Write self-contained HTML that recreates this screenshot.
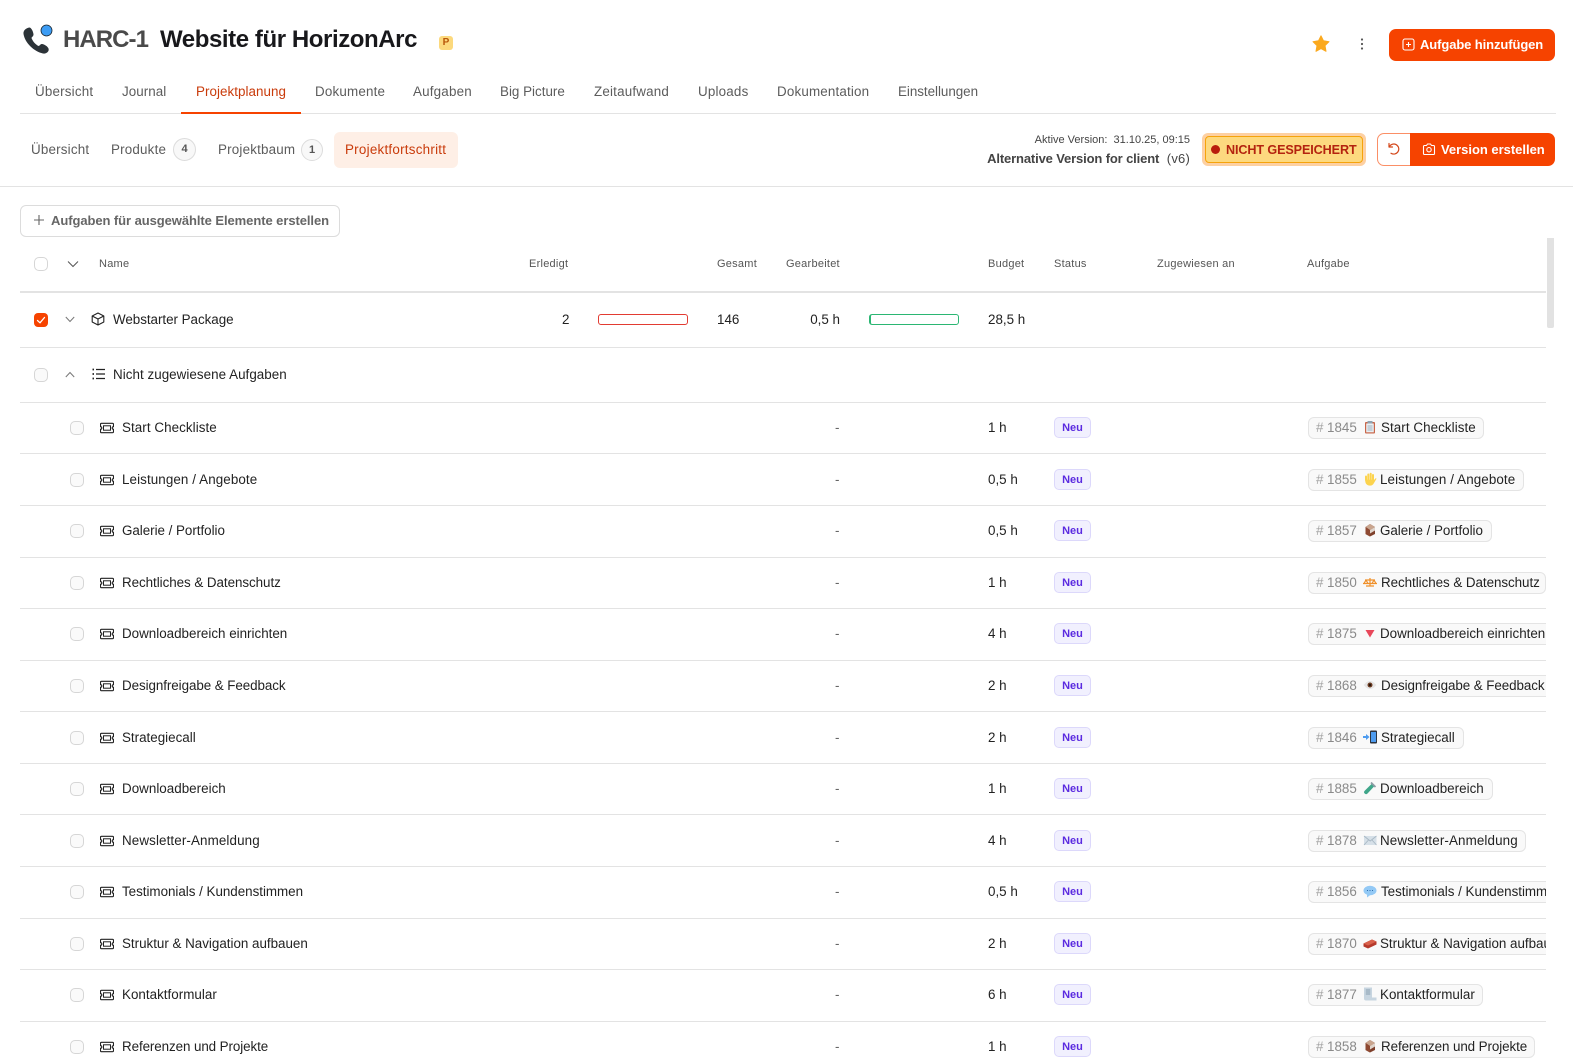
<!DOCTYPE html>
<html lang="de"><head><meta charset="utf-8"><title>HARC-1</title>
<style>
*{box-sizing:border-box}
html,body{margin:0;padding:0;background:#fff}
body{width:1573px;height:1052px;overflow:hidden;position:relative;font-family:"Liberation Sans",Arial,sans-serif;font-size:13.4px;color:#222}
.a{position:absolute;white-space:nowrap}
.t{position:absolute;white-space:nowrap;line-height:20px;height:20px;letter-spacing:0}
.nav{top:82px;color:#5c5c5c;letter-spacing:.19px}
.sub{top:140px;color:#5c5c5c;letter-spacing:.19px}
.ln{position:absolute;left:20px;width:1526px;height:1px;background:#e3e3e3}
.cnt{position:absolute;width:23px;height:23px;border-radius:50%;background:#f8f8f8;border:1px solid #dcdcdc;font-size:11px;font-weight:bold;color:#555;text-align:center;line-height:21px}
.th{top:254px;font-size:11px;color:#555;letter-spacing:.25px}
.cb{position:absolute;width:14px;height:14px;border:1px solid #d6d6d6;border-radius:5px;background:#fafafa}
.r{position:absolute;left:0;width:1546px;height:24px;overflow:hidden}
.r .cb{left:70px;top:5px}
.r svg.tk{position:absolute;left:100px;top:5px}
.r .n{left:122px;top:2px;letter-spacing:var(--l)}
.r .d{left:835px;top:2px;color:#666}
.r .b{left:988px;top:2px}
.r .s{position:absolute;left:1054px;top:1px;width:37px;height:21px;border:1px solid #dcd8fb;background:#f1f0fe;border-radius:5px;color:#5b2be0;font-size:11px;line-height:20px;text-align:center;font-weight:bold}
.c{position:absolute;left:1308px;top:1px;height:22px;background:#f9f9f9;border:1px solid #e4e4e4;border-radius:6px;white-space:nowrap}
.c i{position:absolute;left:7px;top:0;font-style:normal;line-height:20px;color:#a3a3a3;letter-spacing:0}
.c u{position:absolute;left:18px;top:0;text-decoration:none;line-height:20px;color:#8a8a8a;letter-spacing:0}
.c svg{position:absolute;left:54px;top:2px;width:14px;height:14px}
.c b{position:absolute;left:72px;top:0;font-weight:normal;line-height:20px;color:#222;letter-spacing:var(--l);white-space:nowrap}
</style></head><body>

<svg class="a" style="left:22px;top:24px" width="32" height="32" viewBox="0 0 32 32"><path d="M7.5 3.5 C4 4 1 6.500 1.500 10 C3 19 12 27.500 21 29.500 C24.500 30 27.500 27.500 26.500 24.500 C26 22.500 21.500 19.500 19.500 20 C18 20.500 17.500 22 16.500 22 C13.500 20.500 10.500 17 9.500 14 C9.500 13 11.500 12.500 11.500 10.500 C11.500 8.500 9.500 3.500 7.500 3.500Z" fill="#2c3338"/><circle cx="24.500" cy="6.500" r="5.500" fill="#3d9df5" stroke="#1d2730" stroke-width=".8"/></svg>
<div class="a" style="left:63px;top:25px;font-size:24px;line-height:30px;font-weight:bold;color:#4a4a4a;letter-spacing:-.95px">HARC-1</div>
<div class="a" style="left:160px;top:25px;font-size:24px;line-height:30px;font-weight:bold;color:#18181b;letter-spacing:-.42px">Website für HorizonArc</div>
<div class="a" style="left:439px;top:36px;width:14px;height:14px;border-radius:3px;background:#fcd97d;color:#b8570a;font-size:10px;font-weight:bold;line-height:14px;text-align:center">P</div>

<svg class="a" style="left:1312px;top:35px" width="18" height="18" viewBox="0 0 18 18"><path d="M9 .8 11.500 5.800 17 6.700 13 10.600 14 16.300 9 13.600 4 16.300 5 10.600 1 6.700 6.500 5.800Z" fill="#fba91e" stroke="#fba91e" stroke-linejoin="round"/></svg>
<svg class="a" style="left:1359px;top:38px" width="6" height="12" viewBox="0 0 6 12"><circle cx="3" cy="1.500" r="1.100" fill="#555"/><circle cx="3" cy="6" r="1.100" fill="#555"/><circle cx="3" cy="10.500" r="1.100" fill="#555"/></svg>
<div class="a" style="left:1389px;top:29px;width:166px;height:32px;background:#f64300;border-radius:7px"></div>
<svg class="a" style="left:1402px;top:38px" width="13" height="13" viewBox="0 0 13 13" fill="none" stroke="#fff" stroke-width="1.100"><rect x="1" y="1" width="11" height="11" rx="2"/><path d="M6.500 4v5M4 6.500h5"/></svg>
<div class="t" style="left:1420px;top:35px;color:#fff;font-weight:bold;font-size:13px;letter-spacing:-.1px">Aufgabe hinzufügen</div>

<div class="t nav" style="left:35px">Übersicht</div>
<div class="t nav" style="left:122px;letter-spacing:.06px">Journal</div>
<div class="t nav" style="left:196px;color:#c93b0b;letter-spacing:.05px">Projektplanung</div>
<div class="t nav" style="left:315px">Dokumente</div>
<div class="t nav" style="left:413px">Aufgaben</div>
<div class="t nav" style="left:500px;letter-spacing:.01px">Big Picture</div>
<div class="t nav" style="left:594px">Zeitaufwand</div>
<div class="t nav" style="left:698px">Uploads</div>
<div class="t nav" style="left:777px;letter-spacing:.17px">Dokumentation</div>
<div class="t nav" style="left:898px;letter-spacing:-.03px">Einstellungen</div>
<div class="a" style="left:20px;top:113px;width:1536px;height:1px;background:#e3e3e3"></div>
<div class="a" style="left:181px;top:112px;width:120px;height:1.500px;background:#f64300"></div>

<div class="t sub" style="left:31px">Übersicht</div>
<div class="t sub" style="left:111px">Produkte</div>
<div class="cnt" style="left:173px;top:138px">4</div>
<div class="t sub" style="left:218px">Projektbaum</div>
<div class="cnt" style="left:301px;top:139px;width:22px;height:22px;line-height:20px">1</div>
<div class="a" style="left:334px;top:132px;width:124px;height:36px;border-radius:6px;background:#feefe6"></div>
<div class="t sub" style="left:345px;color:#c93b0b;letter-spacing:.25px">Projektfortschritt</div>

<div class="a" style="right:383px;top:132px;font-size:11px;line-height:16px;color:#444">Aktive Version:&nbsp; 31.10.25, 09:15</div>
<div class="a" style="right:383px;top:149px;line-height:20px;color:#444;font-size:13px;letter-spacing:.2px"><b style="letter-spacing:-.14px">Alternative Version for client</b>&nbsp; (v6)</div>
<div class="a" style="left:1202px;top:133px;width:164px;height:33px;border-radius:6px;background:#fdd0a2"></div>
<div class="a" style="left:1205px;top:136px;width:158px;height:27px;border-radius:4px;background:#fdd97f;border:1px solid #f5a30b"></div>
<div class="a" style="left:1211px;top:145px;width:9px;height:9px;border-radius:50%;background:#b91c0c"></div>
<div class="t" style="left:1226px;top:140px;color:#b4230f;font-weight:bold;font-size:12.6px;letter-spacing:-.1px">NICHT GESPEICHERT</div>
<div class="a" style="left:1377px;top:133px;width:40px;height:33px;border:1px solid #fb8f66;border-radius:7px;background:#fff"></div>
<div class="a" style="left:1410px;top:133px;width:145px;height:33px;background:#f64300;border-radius:0 7px 7px 0"></div>
<svg class="a" style="left:1387px;top:142px" width="14" height="14" viewBox="0 0 14 14" fill="none" stroke="#d4471a" stroke-width="1.200" stroke-linecap="round" stroke-linejoin="round"><path d="M2 1.500v3.500h3.500"/><path d="M2.200 5A5 5 0 1 1 4 11.200"/></svg>
<svg class="a" style="left:1422px;top:142px" width="14" height="14" viewBox="0 0 14 14" fill="none" stroke="#fff" stroke-width="1.100" stroke-linejoin="round"><path d="M2.500 3.500h2l1-1.500h3l1 1.500h2a1 1 0 0 1 1 1v7a1 1 0 0 1-1 1h-9a1 1 0 0 1-1-1v-7a1 1 0 0 1 1-1z"/><circle cx="7" cy="7.700" r="2.200"/></svg>
<div class="t" style="left:1441px;top:140px;color:#fff;font-weight:bold;font-size:13px;letter-spacing:-.02px">Version erstellen</div>
<div class="a" style="left:0;top:186px;width:1573px;height:1px;background:#e3e3e3"></div>

<div class="a" style="left:20px;top:205px;width:320px;height:32px;border:1px solid #dcdcdc;border-radius:6px;background:#fff"></div>
<svg class="a" style="left:33px;top:214px" width="12" height="12" viewBox="0 0 12 12" fill="none" stroke="#666" stroke-width="1.100"><path d="M6 1v10M1 6h10"/></svg>
<div class="t" style="left:51px;top:211px;color:#666;font-weight:bold;font-size:13px;letter-spacing:-.07px">Aufgaben für ausgewählte Elemente erstellen</div>

<div class="cb" style="left:34px;top:257px;background:#fff"></div>
<svg class="a" style="left:67px;top:260px" width="12" height="8" viewBox="0 0 12 8" fill="none" stroke="#555" stroke-width="1"><path d="M1 1.500 6 6.500 11 1.500"/></svg>
<div class="t th" style="left:99px">Name</div>
<div class="t th" style="left:529px">Erledigt</div>
<div class="t th" style="left:717px">Gesamt</div>
<div class="t th" style="left:786px">Gearbeitet</div>
<div class="t th" style="left:988px">Budget</div>
<div class="t th" style="left:1054px">Status</div>
<div class="t th" style="left:1157px">Zugewiesen an</div>
<div class="t th" style="left:1307px">Aufgabe</div>
<div class="a" style="left:20px;top:291px;width:1526px;height:2px;background:#e3e3e3"></div>

<div class="a" style="left:34px;top:313px;width:14px;height:14px;border-radius:4px;background:#f64300"></div>
<svg class="a" style="left:36px;top:315px" width="10" height="10" viewBox="0 0 10 10" fill="none" stroke="#fff" stroke-width="1.300" stroke-linecap="round" stroke-linejoin="round"><path d="M1.500 5.500 4 7.800 8.500 2.500"/></svg>
<svg class="a" style="left:65px;top:316px" width="10" height="7" viewBox="0 0 10 7" fill="none" stroke="#777" stroke-width="1"><path d="M.8 1 5 5.500 9.200 1"/></svg>
<svg class="a" style="left:91px;top:312px" width="14" height="14" viewBox="0 0 14 14" fill="none" stroke="#222" stroke-width="1.100" stroke-linejoin="round"><path d="M7 1 12.800 4v6L7 13 1.200 10V4z"/><path d="M1.200 4 7 7 12.800 4M7 7v6"/></svg>
<div class="t" style="left:113px;top:310px;letter-spacing:-.03px">Webstarter Package</div>
<div class="t" style="left:562px;top:310px">2</div>
<div class="a" style="left:598px;top:314px;width:90px;height:11px;border:1px solid #e23b32;border-radius:3px"></div>
<div class="t" style="left:717px;top:310px">146</div>
<div class="t" style="right:733px;top:310px">0,5 h</div>
<div class="a" style="left:869px;top:314px;width:90px;height:11px;border:1px solid #2bb673;border-left-width:2px;border-radius:3px"></div>
<div class="t" style="left:988px;top:310px">28,5 h</div>
<div class="ln" style="top:347px"></div>

<div class="cb" style="left:34px;top:368px"></div>
<svg class="a" style="left:65px;top:371px" width="10" height="7" viewBox="0 0 10 7" fill="none" stroke="#777" stroke-width="1"><path d="M.8 6 5 1.500 9.200 6"/></svg>
<svg class="a" style="left:92px;top:368px" width="13" height="12" viewBox="0 0 13 12" fill="none" stroke="#222" stroke-width="1.200"><path d="M4 1.500h9M4 6h9M4 10.500h9"/><path d="M.5 1.500h1.500M.5 6h1.500M.5 10.500h1.500" stroke-width="1.800"/></svg>
<div class="t" style="left:113px;top:365px;letter-spacing:.04px">Nicht zugewiesene Aufgaben</div>
<div class="ln" style="top:402px"></div>

<svg width="0" height="0" style="position:absolute"><defs>
<symbol id="tk" viewBox="0 0 14 14"><g fill="none" stroke="#222" stroke-width="1.150"><path d="M1.500 2.300h11a1 1 0 0 1 1 1v2.400a1.300 1.300 0 0 0 0 2.600v2.400a1 1 0 0 1-1 1h-11a1 1 0 0 1-1-1V8.300a1.300 1.300 0 0 0 0-2.600V3.300a1 1 0 0 1 1-1z"/><rect x="3.500" y="4.800" width="7" height="4.400" stroke-width="1"/></g></symbol>
<symbol id="pk" viewBox="0 0 14 14"><path d="M7 1 12 4v7L7 13.500 2.500 11V4z" fill="#7e3f2b"/><path d="M2.500 4 7 1 12 4 7 7z" fill="#c9a58e"/><path d="M2.500 4 7 7v6.500L2.500 11z" fill="#8f4a33"/><path d="M7 7 12 4v3.500L7 10.500z" fill="#e0d5cc"/></symbol>
</defs></svg>

<div class="r" style="top:416px;--l:.065px"><span class="cb"></span><svg class="tk" width="14" height="14"><use href="#tk"/></svg><span class="t n">Start Checkliste</span><span class="t d">-</span><span class="t b">1 h</span><span class="s">Neu</span><div class="c" style="width:176px"><i>#</i><u>1845</u><svg viewBox="0 0 14 14"><rect x="2" y="2" width="10" height="11.500" rx="1" fill="#c8664a"/><rect x="3.200" y="3.500" width="7.600" height="8.800" fill="#e9eef2"/><rect x="4.500" y="1" width="5" height="2.500" fill="#8fa3b0"/><path d="M4.500 6h5M4.500 8h5M4.500 10h5" stroke="#9fb3c0"/></svg><b>Start Checkliste</b></div></div>
<div class="ln" style="top:453px"></div>
<div class="r" style="top:468px;--l:.095px"><span class="cb"></span><svg class="tk" width="14" height="14"><use href="#tk"/></svg><span class="t n">Leistungen / Angebote</span><span class="t d">-</span><span class="t b">0,5 h</span><span class="s">Neu</span><div class="c" style="width:216px"><i>#</i><u>1855</u><svg viewBox="0 0 14 14"><path d="M3 8V4.500M5.300 7V2.500M7.700 7V1.800M10 7.500V3" stroke="#fcd34d" stroke-width="2" stroke-linecap="round"/><path d="M2.200 7.500h9.500L12.800 6l.7.800L11 11c-.8 1.800-2.200 2.600-4 2.600-3 0-5-1.800-4.800-6.100z" fill="#fcd34d"/></svg><b style="left:71px">Leistungen / Angebote</b></div></div>
<div class="ln" style="top:505px"></div>
<div class="r" style="top:519px;--l:-.03px"><span class="cb"></span><svg class="tk" width="14" height="14"><use href="#tk"/></svg><span class="t n">Galerie / Portfolio</span><span class="t d">-</span><span class="t b">0,5 h</span><span class="s">Neu</span><div class="c" style="width:184px"><i>#</i><u>1857</u><svg><use href="#pk"/></svg><b style="left:71px">Galerie / Portfolio</b></div></div>
<div class="ln" style="top:557px"></div>
<div class="r" style="top:571px;--l:-.05px"><span class="cb"></span><svg class="tk" width="14" height="14"><use href="#tk"/></svg><span class="t n">Rechtliches &amp; Datenschutz</span><span class="t d">-</span><span class="t b">1 h</span><span class="s">Neu</span><div class="c" style="width:238px"><i>#</i><u>1850</u><svg viewBox="0 0 14 14" fill="none" stroke="#f0902a" stroke-width="1.200"><path d="M0 8.500h14M7 3v8M3 11h8M2 5h10"/><path d="M3 5 1 8.500M3 5 5 8.500M11 5 9 8.500M11 5l2 3.500"/></svg><b>Rechtliches &amp; Datenschutz</b></div></div>
<div class="ln" style="top:608px"></div>
<div class="r" style="top:622px;--l:0px"><span class="cb"></span><svg class="tk" width="14" height="14"><use href="#tk"/></svg><span class="t n">Downloadbereich einrichten</span><span class="t d">-</span><span class="t b">4 h</span><span class="s">Neu</span><div class="c" style="width:250px"><i>#</i><u>1875</u><svg viewBox="0 0 14 14"><path d="M2.500 4h9L7 11.500z" fill="#e8475a"/></svg><b style="left:71px">Downloadbereich einrichten</b></div></div>
<div class="ln" style="top:660px"></div>
<div class="r" style="top:674px;--l:-.07px"><span class="cb"></span><svg class="tk" width="14" height="14"><use href="#tk"/></svg><span class="t n">Designfreigabe &amp; Feedback</span><span class="t d">-</span><span class="t b">2 h</span><span class="s">Neu</span><div class="c" style="width:250px"><i>#</i><u>1868</u><svg viewBox="0 0 14 14"><path d="M.8 7C3 4 5 3 7 3s4 1 6.200 4C11 10 9 11 7 11S3 10 .8 7z" fill="#e6e6e6"/><circle cx="7" cy="7" r="2.500" fill="#6b3b22"/><circle cx="7" cy="7" r="1.100" fill="#1f1209"/></svg><b>Designfreigabe &amp; Feedback</b></div></div>
<div class="ln" style="top:711px"></div>
<div class="r" style="top:726px;--l:0px"><span class="cb"></span><svg class="tk" width="14" height="14"><use href="#tk"/></svg><span class="t n">Strategiecall</span><span class="t d">-</span><span class="t b">2 h</span><span class="s">Neu</span><div class="c" style="width:156px"><i>#</i><u>1846</u><svg viewBox="0 0 14 14"><rect x="7" y="0.500" width="7" height="13" rx="1" fill="#2d3440"/><rect x="8" y="2" width="5" height="10" fill="#4e9cf0"/><path d="M0 6h3V4l3.500 3L3 10V8H0z" fill="#4e9cf0"/></svg><b>Strategiecall</b></div></div>
<div class="ln" style="top:763px"></div>
<div class="r" style="top:777px;--l:.02px"><span class="cb"></span><svg class="tk" width="14" height="14"><use href="#tk"/></svg><span class="t n">Downloadbereich</span><span class="t d">-</span><span class="t b">1 h</span><span class="s">Neu</span><div class="c" style="width:185px"><i>#</i><u>1885</u><svg viewBox="0 0 14 14"><path d="M9 2.500 11.500 5 4.500 12.500a1.800 1.800 0 0 1-2.800-2.800z" fill="#3fa68a"/><path d="M8 1.500l4.500 4.500" stroke="#8d9aa3" stroke-width="1.800"/></svg><b style="left:71px">Downloadbereich</b></div></div>
<div class="ln" style="top:814px"></div>
<div class="r" style="top:829px;--l:.115px"><span class="cb"></span><svg class="tk" width="14" height="14"><use href="#tk"/></svg><span class="t n">Newsletter-Anmeldung</span><span class="t d">-</span><span class="t b">4 h</span><span class="s">Neu</span><div class="c" style="width:218px"><i>#</i><u>1878</u><svg viewBox="0 0 14 14"><rect x="1" y="3" width="12.500" height="9" fill="#d6e0e8"/><path d="M1 3l6.200 5 6.300-5M1 12l4.500-5M13.500 12 9 7" fill="none" stroke="#a8b8c4" stroke-width=".9"/></svg><b style="left:71px">Newsletter-Anmeldung</b></div></div>
<div class="ln" style="top:866px"></div>
<div class="r" style="top:880px;--l:-.02px"><span class="cb"></span><svg class="tk" width="14" height="14"><use href="#tk"/></svg><span class="t n">Testimonials / Kundenstimmen</span><span class="t d">-</span><span class="t b">0,5 h</span><span class="s">Neu</span><div class="c" style="width:250px"><i>#</i><u>1856</u><svg viewBox="0 0 14 14"><ellipse cx="7" cy="6.500" rx="6.500" ry="4.800" fill="#93c9f5"/><path d="M4 10v3.500L8 10.500z" fill="#93c9f5"/><path d="M4 6.500h1M6.500 6.500h1M9 6.500h1" stroke="#2f6fae"/></svg><b>Testimonials / Kundenstimmen</b></div></div>
<div class="ln" style="top:918px"></div>
<div class="r" style="top:932px;--l:-.01px"><span class="cb"></span><svg class="tk" width="14" height="14"><use href="#tk"/></svg><span class="t n">Struktur &amp; Navigation aufbauen</span><span class="t d">-</span><span class="t b">2 h</span><span class="s">Neu</span><div class="c" style="width:250px"><i>#</i><u>1870</u><svg viewBox="0 0 14 14"><path d="M.5 7.500 9 3.500l4.500 2v3L5 12.500.5 10.500z" fill="#b5392b"/><path d="M.5 7.500 9 3.500l4.500 2L5 9.500z" fill="#d9614c"/></svg><b style="left:71px">Struktur &amp; Navigation aufbauen</b></div></div>
<div class="ln" style="top:969px"></div>
<div class="r" style="top:983px;--l:.02px"><span class="cb"></span><svg class="tk" width="14" height="14"><use href="#tk"/></svg><span class="t n">Kontaktformular</span><span class="t d">-</span><span class="t b">6 h</span><span class="s">Neu</span><div class="c" style="width:175px"><i>#</i><u>1877</u><svg viewBox="0 0 14 14"><path d="M1 .5h8v10h4.500v3H3a2 2 0 0 1-2-2z" fill="#c7d5e0"/><path d="M2.800 3h4.500M2.800 5h4.500M2.800 7h4.500" stroke="#8a9fb0"/></svg><b style="left:71px">Kontaktformular</b></div></div>
<div class="ln" style="top:1021px"></div>
<div class="r" style="top:1035px;--l:-.09px"><span class="cb"></span><svg class="tk" width="14" height="14"><use href="#tk"/></svg><span class="t n">Referenzen und Projekte</span><span class="t d">-</span><span class="t b">1 h</span><span class="s">Neu</span><div class="c" style="width:227px"><i>#</i><u>1858</u><svg><use href="#pk"/></svg><b>Referenzen und Projekte</b></div></div>

<div class="a" style="left:1547px;top:238px;width:7px;height:90px;background:#e2e2e2;border-radius:0 0 2px 2px"></div>
</body></html>
